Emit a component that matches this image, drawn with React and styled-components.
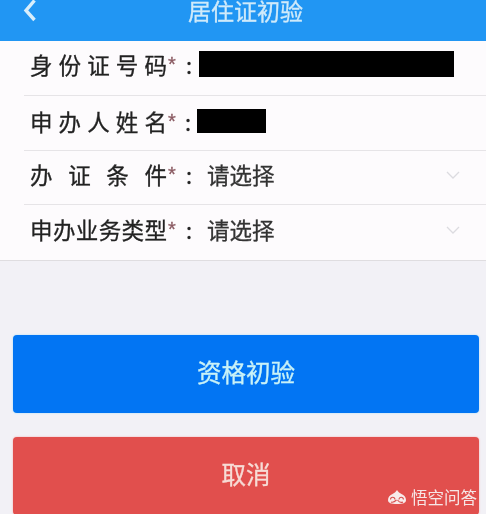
import React from "react";
import styled, { createGlobalStyle } from "styled-components";

const Global = createGlobalStyle`
  html, body { margin: 0; padding: 0; background: #f2f1f6; }
  body { font-family: "Noto Sans CJK SC", "Liberation Sans", sans-serif; overflow: hidden; }
`;
const Page = styled.div`
  position: relative;
  width: 486px;
  height: 514px;
  overflow: hidden;
  background: #f2f1f6;
  filter: blur(0.4px);
`;
const Header = styled.header`
  height: 41px;
  box-sizing: border-box;
  background: #2196f3;
  box-shadow: 0 1px 2px rgba(33, 150, 243, 0.35);
  display: grid;
  grid-template-columns: 1fr auto 1fr;
  align-items: start;
  padding-left: 23px;
  padding-right: 18px;
`;
const Back = styled.svg`
  width: 14px;
  height: 22px;
  display: block;
`;
const Title = styled.h1`
  margin: 0;
  font-size: 23px;
  font-weight: 400;
  line-height: 20px;
  color: #cfeafa;
  -webkit-text-stroke: 0.3px #cfeafa;
`;
const Form = styled.section`
  background: #fdfbfd;
  border-bottom: 1px solid #dfdde0;
`;
const Row = styled.div`
  height: ${p => p.$h}px;
  box-sizing: border-box;
  margin-left: 24px;
  padding-left: 6px;
  padding-bottom: ${p => p.$lift}px;
  display: flex;
  align-items: center;
  color: #222;
  font-size: 22.5px;
  -webkit-text-stroke: 0.3px currentColor;
  border-bottom: ${p => (p.$last ? "none" : "1px solid #e6e4e7")};
`;
const Label = styled.span`
  width: 137px;
  flex: none;
  text-align: justify;
  text-align-last: justify;
  line-height: 28px;
`;
const Star = styled.span`
  width: 11px;
  flex: none;
  margin-left: 1px;
  color: #8a5a62;
  font-size: 20px;
  line-height: 20px;
  font-family: "Liberation Sans", sans-serif;
`;
const Colon = styled.span`
  width: ${p => p.$w}px;
  flex: none;
  text-align: center;
  font-size: 22px;
`;
const Redacted = styled.div`
  width: ${p => p.$w}px;
  height: ${p => p.$h}px;
  background: #000;
  flex: none;
`;
const Placeholder = styled.span`
  flex: 1;
  margin-left: 8px;
  color: #333;
`;
const Chevron = styled.svg`
  width: 16px;
  height: 10px;
  margin: 3px 25px 0 0;
  flex: none;
`;
const Actions = styled.div`
  display: flex;
  flex-direction: column;
  gap: 24px;
  padding: 74px 7px 0 13px;
`;
const Button = styled.button`
  height: 78px;
  flex: none;
  border: none;
  border-radius: 4px;
  background: ${p => p.$bg};
  box-shadow: 0 0 2px ${p => p.$glow};
  color: ${p => p.$fg};
  font: 400 24.5px "Noto Sans CJK SC", sans-serif;
  -webkit-text-stroke: 0.3px currentColor;
  padding: 0 0 6px 0;
`;
const Watermark = styled.div`
  position: absolute;
  right: 9px;
  bottom: 7px;
  display: flex;
  align-items: center;
  gap: 4px;
  color: #f6e6e6;
  font-size: 16.5px;
  line-height: 20px;
`;
const Logo = styled.svg`
  width: 20px;
  height: 16px;
  display: block;
`;

const Select = ({ label, last }) => (
  <Row $h={last ? 55 : 54} $last={last} $lift={8}>
    <Label>{label}</Label>
    <Star>*</Star>
    <Colon $w={20}>:</Colon>
    <Placeholder>请选择</Placeholder>
    <Chevron viewBox="0 0 16 10">
      <path d="M2 2l6 6 6-6" fill="none" stroke="#dcdbe0" strokeWidth="1.3" />
    </Chevron>
  </Row>
);

export default function App() {
  return (
    <Page>
      <Global />
      <Header>
        <Back viewBox="0 0 14 22">
          <path d="M11.500 0.500L3 10.500l8.500 9.500" fill="none" stroke="#d8eefb" strokeWidth="3.4" />
        </Back>
        <Title>居住证初验</Title>
      </Header>
      <Form>
        <Row $h={55} $lift={9}>
          <Label>身份证号码</Label>
          <Star>*</Star>
          <Colon $w={20}>:</Colon>
          <Redacted $w={255} $h={26} />
        </Row>
        <Row $h={55} $lift={4}>
          <Label>申办人姓名</Label>
          <Star>*</Star>
          <Colon $w={18}>:</Colon>
          <Redacted $w={69} $h={24} />
        </Row>
        <Select label="办证条件" />
        <Select label="申办业务类型" last />
      </Form>
      <Actions>
        <Button $bg="#0275f3" $glow="#9fdcfb" $fg="#c9f2f7">资格初验</Button>
        <Button $bg="#e14f4d" $glow="#f7a9a6" $fg="#f7dcd6">取消</Button>
      </Actions>
      <Watermark>
        <Logo viewBox="0 0 20 16">
          <path d="M10 1c1 2 3 3 4.500 4C17 6 19 8 19 11c0 3-3 4-9 4s-9-1-9-4c0-3 2-5 4.500-6C7 4 9 3 10 1z" fill="#f8eaea" />
          <path d="M3.500 10.500a2.200 2.200 0 1 1 4.400 0M12 10.500a2.200 2.200 0 1 1 4.400 0M4 13c2 1 3.500 0 5.500-2M10.500 11c1.500 2 3.500 3 5.500 2" fill="none" stroke="#d9504e" strokeWidth="1.1" />
        </Logo>
        悟空问答
      </Watermark>
    </Page>
  );
}
